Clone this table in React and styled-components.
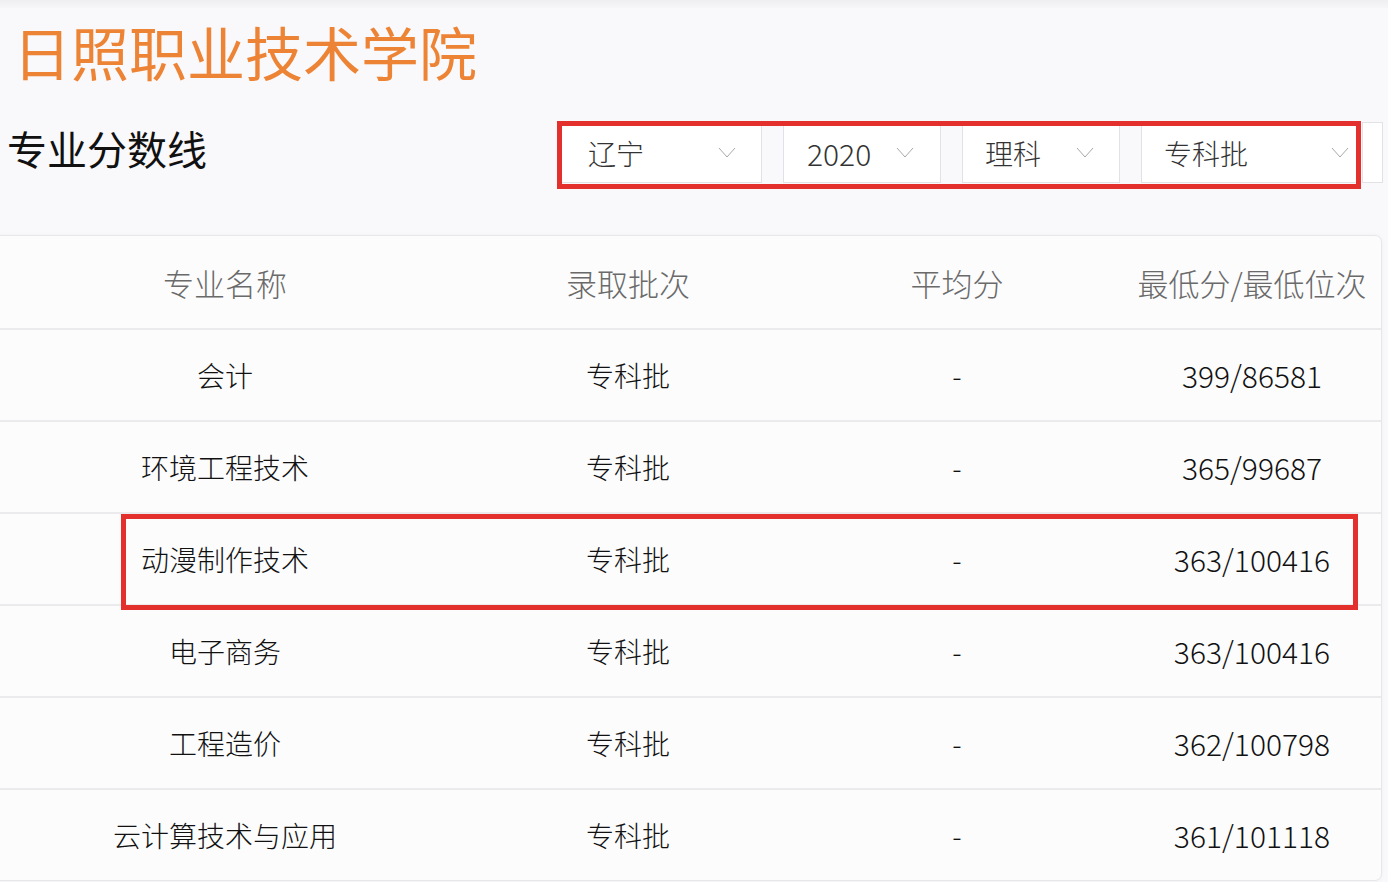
import React from "react";
import styled, { createGlobalStyle } from "styled-components";

const Global = createGlobalStyle`
  html, body { margin: 0; padding: 0; }
  body {
    background: #f9f8fb;
    font-family: "Noto Sans CJK SC", "Noto Sans", sans-serif;
    overflow: hidden;
  }
`;

const Page = styled.div`
  width: 1388px;
  height: 882px;
  overflow: hidden;
`;

const TopStrip = styled.div`
  height: 8px;
  background: linear-gradient(#efeff1, #f6f5f8);
`;

const Title = styled.h1`
  margin: 14px 0 0 13px;
  font-size: 58px;
  line-height: 58px;
  font-weight: 400;
  color: #ed8435;
`;

const FilterRow = styled.div`
  display: flex;
  align-items: center;
  margin-top: 42px;
  padding: 0 5px 0 7px;
  height: 61px;
`;

const Heading = styled.h2`
  margin: 0 0 10px 0;
  font-size: 40px;
  line-height: 40px;
  font-weight: 400;
  color: #111;
`;

const FilterGroup = styled.div`
  position: relative;
  margin-left: auto;
  display: flex;
  align-items: stretch;
  height: 61px;
  gap: 21px;
`;

const Select = styled.div`
  width: ${(p) => p.$w}px;
  box-sizing: border-box;
  background: #fff;
  border: 1px solid #e2e2e6;
  display: flex;
  align-items: center;
  justify-content: space-between;
  padding: 0 ${(p) => p.$pr}px 0 ${(p) => p.$pl}px;
  font-size: ${(p) => (p.$num ? 30 : 28)}px;
  font-weight: 300;
  color: #333;
`;

const Peek = styled.div`
  width: 21px;
  margin-left: -16px;
  box-sizing: border-box;
  background: #fff;
  border: 1px solid #e2e2e6;
`;

const RedFrame = styled.div`
  position: absolute;
  left: -4px;
  top: -1px;
  width: 804px;
  height: 68px;
  box-sizing: border-box;
  border: 5px solid #e3302c;
  pointer-events: none;
`;

const Card = styled.div`
  margin: 52px 0 0 -8px;
  width: 1390px;
  box-sizing: border-box;
  background: #fcfcfd;
  border: 1px solid #e7e7ea;
  border-radius: 7px;
  box-shadow: 0 0 4px rgba(0, 0, 0, 0.04);
  overflow: hidden;
`;

const Row = styled.div`
  position: relative;
  display: grid;
  grid-template-columns: 464px 342px 316px 268px;
  height: ${(p) => (p.$head ? 92 : 90)}px;
  border-bottom: 2px solid #ebebee;
  align-items: center;
  &:last-child { border-bottom: none; }
`;

const Cell = styled.div`
  text-align: center;
  white-space: nowrap;
  font-size: ${(p) => (p.$head ? 31 : p.$num ? 30 : 28)}px;
  font-weight: 300;
  color: ${(p) => (p.$head ? "#6a6a6a" : "#111")};
  padding-left: ${(p) => (p.$last ? 6 : 0)}px;
`;

const Highlight = styled.div`
  position: absolute;
  left: 128px;
  right: 23px;
  top: 0px;
  height: 96px;
  box-sizing: border-box;
  border: 5px solid #e3302c;
  pointer-events: none;
`;

const Chevron = () => (
  <svg width="18" height="11" viewBox="0 0 18 11" fill="none">
    <path d="M1 1 L9 10 L17 1" stroke="#a8a8ac" strokeWidth="1" />
  </svg>
);

const selects = [
  { label: "辽宁", w: 201, pl: 26, pr: 25 },
  { label: "2020", w: 158, pl: 23, pr: 26, num: true },
  { label: "理科", w: 158, pl: 22, pr: 25 },
  { label: "专科批", w: 216, pl: 22, pr: 7 },
];

const rows = [
  ["会计", "专科批", "-", "399/86581"],
  ["环境工程技术", "专科批", "-", "365/99687"],
  ["动漫制作技术", "专科批", "-", "363/100416", true],
  ["电子商务", "专科批", "-", "363/100416"],
  ["工程造价", "专科批", "-", "362/100798"],
  ["云计算技术与应用", "专科批", "-", "361/101118"],
];

export default function App() {
  return (
    <Page>
      <Global />
      <TopStrip />
      <Title>日照职业技术学院</Title>
      <FilterRow>
        <Heading>专业分数线</Heading>
        <FilterGroup>
          {selects.map((s) => (
            <Select key={s.label} $w={s.w} $pl={s.pl} $pr={s.pr} $num={s.num}>
              <span>{s.label}</span>
              <Chevron />
            </Select>
          ))}
          <Peek />
          <RedFrame />
        </FilterGroup>
      </FilterRow>
      <Card>
        <Row $head>
          <Cell $head>专业名称</Cell>
          <Cell $head>录取批次</Cell>
          <Cell $head>平均分</Cell>
          <Cell $head $last>最低分/最低位次</Cell>
        </Row>
        {rows.map((r, i) => (
          <Row key={i}>
            <Cell>{r[0]}</Cell>
            <Cell>{r[1]}</Cell>
            <Cell>{r[2]}</Cell>
            <Cell $last $num>{r[3]}</Cell>
            {r[4] && <Highlight />}
          </Row>
        ))}
      </Card>
    </Page>
  );
}
